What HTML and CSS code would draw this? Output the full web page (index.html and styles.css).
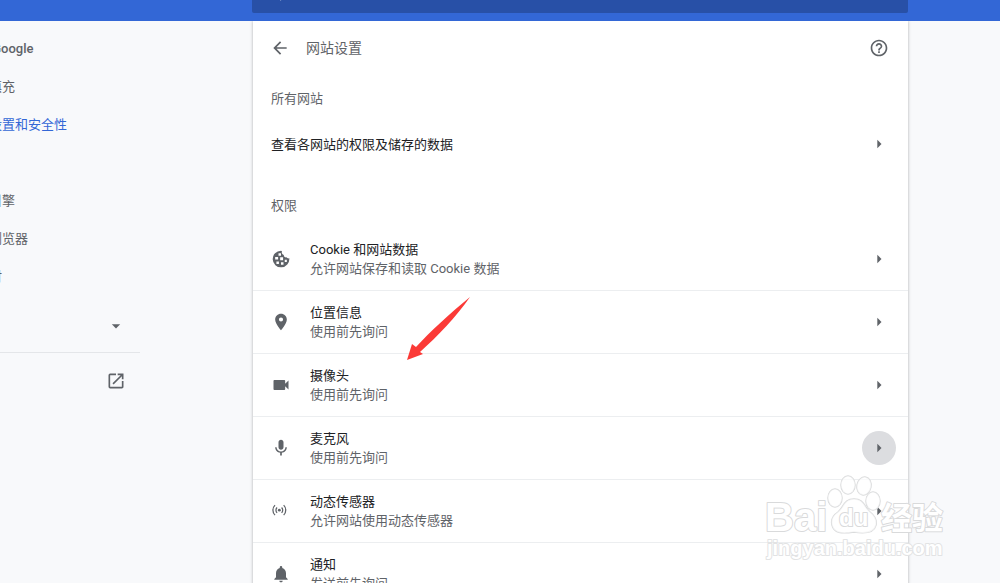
FILE: index.html
```html
<!DOCTYPE html>
<html lang="zh-CN">
<head>
    <meta charset="UTF-8">
    <meta name="viewport" content="width=device-width, initial-scale=1.0">
    <title>设置 - 网站设置</title>
    <link rel="stylesheet" href="styles.css">
</head>
<body>
    <header class="toolbar">
        <label class="search">
            <svg class="search-icon" viewBox="0 0 24 24"><path d="M15.5 14h-.8l-.3-.3A6.5 6.5 0 1 0 13.700 14.400l.3.3v.8l5 5 1.500-1.500zM9.500 14a4.500 4.500 0 1 1 0-9 4.500 4.500 0 0 1 0 9z"/></svg>
            <input class="search-input" type="search" aria-label="在设置中搜索">
        </label>
    </header>

    <div class="layout">
        <nav class="sidebar">
            <ul class="menu">
                <li><a href="#" class="menu-link menu-strong">您与 Google</a></li>
                <li><a href="#" class="menu-link">自动填充</a></li>
                <li><a href="#" class="menu-link menu-active">隐私设置和安全性</a></li>
                <li><a href="#" class="menu-link">外观</a></li>
                <li><a href="#" class="menu-link">搜索引擎</a></li>
                <li><a href="#" class="menu-link">默认浏览器</a></li>
                <li><a href="#" class="menu-link">启动时</a></li>
            </ul>
            <button class="menu-row" type="button" aria-label="高级">
                <svg class="icon" viewBox="0 0 24 24"><path d="M7 10l5 5 5-5z"/></svg>
            </button>
            <a href="#" class="menu-row menu-extensions" aria-label="扩展程序">
                <svg class="icon" viewBox="0 0 24 24"><path d="M19 19H5V5h7V3H5a2 2 0 0 0-2 2v14a2 2 0 0 0 2 2h14c1.100 0 2-.9 2-2v-7h-2v7zM14 3v2h3.590l-9.830 9.830 1.410 1.410L19 6.410V10h2V3h-7z"/></svg>
            </a>
        </nav>

        <main class="card">
            <div class="card-header">
                <button class="icon-button" type="button" aria-label="返回">
                    <svg class="icon" viewBox="0 0 24 24"><path d="M20 11H7.830l5.590-5.590L12 4l-8 8 8 8 1.410-1.410L7.830 13H20v-2z"/></svg>
                </button>
                <h1 class="card-title">网站设置</h1>
                <button class="icon-button" type="button" aria-label="帮助">
                    <svg class="icon" viewBox="0 0 24 24"><path d="M11 18h2v-2h-2v2zm1-16C6.480 2 2 6.480 2 12s4.480 10 10 10 10-4.480 10-10S17.520 2 12 2zm0 18c-4.410 0-8-3.590-8-8s3.590-8 8-8 8 3.590 8 8-3.590 8-8 8zm0-14c-2.210 0-4 1.790-4 4h2c0-1.100.9-2 2-2s2 .9 2 2c0 2-3 1.750-3 5h2c0-2.250 3-2.500 3-5 0-2.210-1.790-4-4-4z"/></svg>
                </button>
            </div>

            <section class="section">
                <h2 class="section-title">所有网站</h2>
                <div class="row row-single">
                    <div class="row-text">
                        <div class="row-title">查看各网站的权限及储存的数据</div>
                    </div>
                    <button class="icon-button" type="button" aria-label="查看各网站的权限及储存的数据">
                        <svg class="icon" viewBox="0 0 24 24"><path d="M10 7l5 5-5 5z"/></svg>
                    </button>
                </div>
            </section>

            <section class="section">
                <h2 class="section-title">权限</h2>

                <div class="row">
                    <svg class="icon" viewBox="0 0 24 24"><path fill-rule="evenodd" d="M12 2a10 10 0 1 0 10 9.200c-1.300.5-2.700 0-3.200-1.200-2 .4-3.600-1-3.400-2.900-2-.3-3-2.300-2.200-4.100C13 2.300 12.600 2 12 2zM9 5h3v3H9zM5 9.500h3.500v3H5zM11 10h3.500v3.500H11zM6.500 15h3v3h-3zM12 16h3v3h-3zM16.500 13h2.500v2.500h-2.500z"/></svg>
                    <div class="row-text">
                        <div class="row-title">Cookie 和网站数据</div>
                        <div class="row-sub">允许网站保存和读取 Cookie 数据</div>
                    </div>
                    <button class="icon-button" type="button" aria-label="Cookie 和网站数据">
                        <svg class="icon" viewBox="0 0 24 24"><path d="M10 7l5 5-5 5z"/></svg>
                    </button>
                </div>

                <div class="row">
                    <svg class="icon" viewBox="0 0 24 24"><path d="M12 2C8.130 2 5 5.130 5 9c0 5.250 7 13 7 13s7-7.750 7-13c0-3.870-3.130-7-7-7zm0 9.500a2.500 2.500 0 0 1 0-5 2.500 2.500 0 0 1 0 5z"/></svg>
                    <div class="row-text">
                        <div class="row-title">位置信息</div>
                        <div class="row-sub">使用前先询问</div>
                    </div>
                    <button class="icon-button" type="button" aria-label="位置信息">
                        <svg class="icon" viewBox="0 0 24 24"><path d="M10 7l5 5-5 5z"/></svg>
                    </button>
                </div>

                <div class="row">
                    <svg class="icon" viewBox="0 0 24 24"><path d="M17 10.500V7c0-.55-.45-1-1-1H4c-.55 0-1 .45-1 1v10c0 .55.45 1 1 1h12c.55 0 1-.45 1-1v-3.500l4 4v-11l-4 4z"/></svg>
                    <div class="row-text">
                        <div class="row-title">摄像头</div>
                        <div class="row-sub">使用前先询问</div>
                    </div>
                    <button class="icon-button" type="button" aria-label="摄像头">
                        <svg class="icon" viewBox="0 0 24 24"><path d="M10 7l5 5-5 5z"/></svg>
                    </button>
                </div>

                <div class="row">
                    <svg class="icon" viewBox="0 0 24 24"><path d="M12 14c1.660 0 3-1.340 3-3V5c0-1.660-1.340-3-3-3S9 3.340 9 5v6c0 1.660 1.340 3 3 3zm5.300-3c0 3-2.540 5.100-5.300 5.100S6.700 14 6.700 11H5c0 3.410 2.720 6.230 6 6.720V21h2v-3.280c3.280-.48 6-3.300 6-6.720h-1.700z"/></svg>
                    <div class="row-text">
                        <div class="row-title">麦克风</div>
                        <div class="row-sub">使用前先询问</div>
                    </div>
                    <button class="icon-button icon-button-active" type="button" aria-label="麦克风">
                        <svg class="icon" viewBox="0 0 24 24"><path d="M10 7l5 5-5 5z"/></svg>
                    </button>
                </div>

                <div class="row">
                    <svg class="icon icon-line" viewBox="0 0 24 24"><circle class="dot" cx="10" cy="11" r="1.700"/><path d="M7.300 7.800a4.500 4.500 0 0 0 0 6.400M12.700 7.800a4.500 4.500 0 0 1 0 6.400M4.800 5a8.500 8.500 0 0 0 0 12M15.200 5a8.500 8.500 0 0 1 0 12"/></svg>
                    <div class="row-text">
                        <div class="row-title">动态传感器</div>
                        <div class="row-sub">允许网站使用动态传感器</div>
                    </div>
                    <button class="icon-button" type="button" aria-label="动态传感器">
                        <svg class="icon" viewBox="0 0 24 24"><path d="M10 7l5 5-5 5z"/></svg>
                    </button>
                </div>

                <div class="row">
                    <svg class="icon" viewBox="0 0 24 24"><path d="M12 22c1.100 0 2-.9 2-2h-4c0 1.100.89 2 2 2zm6-6v-5c0-3.070-1.640-5.640-4.500-6.320V4a1.500 1.500 0 0 0-3 0v.68C7.630 5.360 6 7.920 6 11v5l-2 2v1h16v-1l-2-2z"/></svg>
                    <div class="row-text">
                        <div class="row-title">通知</div>
                        <div class="row-sub">发送前先询问</div>
                    </div>
                    <button class="icon-button" type="button" aria-label="通知">
                        <svg class="icon" viewBox="0 0 24 24"><path d="M10 7l5 5-5 5z"/></svg>
                    </button>
                </div>
            </section>
        </main>
    </div>

    <!-- Red pointer -->
    <svg class="pointer" viewBox="0 0 70 70"><path d="M3 66L8 50l4 3C26 38 46 19 66 3 52 23 34 42 16 58l3 2z"/></svg>

    <!-- Watermark -->
    <svg class="watermark" viewBox="0 0 190 95">
        <g class="paw">
            <ellipse cx="75" cy="26" rx="7" ry="9"/>
            <ellipse cx="88" cy="13" rx="7" ry="9"/>
            <ellipse cx="104" cy="14" rx="7" ry="9" transform="rotate(12 104 14)"/>
            <ellipse cx="113" cy="29" rx="7" ry="9"/>
            <path d="M94 27c-10 0-10 8-16 13-6 4-7 9-6 13 2 8 9 9 22 7 12 2 20 1 22-7 1-5-1-9-6-13-6-5-6-13-16-13z"/>
        </g>
        <text class="mark-logo" x="5" y="59">Bai</text>
        <text class="mark-du" x="79" y="54">du</text>
        <text class="mark-cn" x="121" y="57">经验</text>
        <text class="mark-url" x="7" y="83">jingyan.baidu.com</text>
    </svg>
</body>
</html>
```
FILE: styles.css
```css
* {
    box-sizing: border-box;
    margin: 0;
    padding: 0;
}

body {
    font-family: Roboto, "Noto Sans CJK SC", sans-serif;
    font-size: 13px;
    line-height: 19px;
    background-color: #f8f9fb;
    color: #202124;
    height: 100vh;
    overflow: hidden;
    position: relative;
}

button {
    border: none;
    background: none;
    font: inherit;
    cursor: pointer;
}

a {
    color: inherit;
    text-decoration: none;
}

.toolbar {
    display: flex;
    align-items: flex-end;
    height: 21px;
    padding: 0 92px 8px 252px;
    background-color: #3367d6;
    overflow: hidden;
}

.search {
    display: flex;
    flex: 1;
    align-items: center;
    height: 36px;
    padding: 0 16px;
    gap: 12px;
    border-radius: 2px;
    background-color: #2850a7;
}

.search-icon {
    width: 16px;
    height: 16px;
    fill: #a9b9dc;
}

.search-input {
    flex: 1;
    border: none;
    outline: none;
    background: none;
    color: white;
}

.layout {
    display: grid;
    grid-template-columns: 253px minmax(0, 1fr);
    padding-right: 92px;
}

.icon {
    display: block;
    flex: none;
    width: 20px;
    height: 20px;
    fill: #5f6368;
}

.icon-line {
    fill: none;
    stroke: #5f6368;
    stroke-width: 1.5;
}

.icon-line .dot {
    fill: #5f6368;
    stroke: none;
}

/* Sidebar */
.sidebar {
    width: 140px;
    padding-top: 9px;
    color: #5f6368;
}

.menu {
    list-style: none;
    margin-left: -37px;
    margin-bottom: 4px;
}

.menu-link {
    display: block;
    line-height: 38px;
    white-space: nowrap;
}

.menu-strong {
    font-weight: 500;
}

.menu-active {
    color: #3367d6;
}

.menu-row {
    display: flex;
    align-items: center;
    justify-content: flex-end;
    width: 100%;
    height: 52px;
    padding-right: 14px;
}

.menu-extensions {
    height: 56px;
    border-top: 1px solid #e4e6e9;
}

/* Settings card */
.card {
    background-color: white;
    box-shadow: 0 0 3px rgba(60, 64, 67, 0.4);
    clip-path: inset(0 -4px);
}

.card-header {
    display: flex;
    align-items: center;
    gap: 9px;
    height: 56px;
    padding: 0 12px 2px 10px;
}

.card-title {
    flex: 1;
    font-size: 14px;
    font-weight: 400;
    color: #5f6368;
}

.section {
    margin-bottom: 17px;
}

.section-title {
    padding-left: 18px;
    font-size: 13px;
    font-weight: 400;
    line-height: 44px;
    color: #5f6368;
}

.row {
    display: flex;
    align-items: center;
    gap: 19px;
    height: 63px;
    padding: 0 12px 0 18px;
    border-bottom: 1px solid #eceef0;
}

.row-single {
    height: 46px;
    border-bottom: none;
}

.row-text {
    flex: 1;
}

.row-sub {
    color: #5f6368;
}

.icon-button {
    display: flex;
    flex: none;
    align-items: center;
    justify-content: center;
    width: 34px;
    height: 34px;
    border-radius: 50%;
}

.icon-button-active {
    background-color: #dcdde0;
}

/* Drawn over the page */
.pointer {
    position: absolute;
    top: 294px;
    left: 404px;
    width: 70px;
    height: 70px;
    fill: #fb3a37;
}

.watermark {
    position: absolute;
    right: 50px;
    bottom: 16px;
    width: 190px;
    height: 95px;
    pointer-events: none;
    font-family: "Liberation Sans", "Noto Sans CJK SC", sans-serif;
    font-weight: 700;
    fill: white;
    stroke: #d9dadb;
    stroke-width: 2;
    stroke-linejoin: round;
    paint-order: stroke;
}

.paw {
    fill: rgba(255, 255, 255, 0.7);
    stroke-width: 1.5;
}

.mark-logo {
    font-size: 40px;
}

.mark-du {
    font-size: 24px;
}

.mark-cn {
    font-size: 31px;
}

.mark-url {
    font-size: 20px;
    stroke: #e2e3e4;
}
```
